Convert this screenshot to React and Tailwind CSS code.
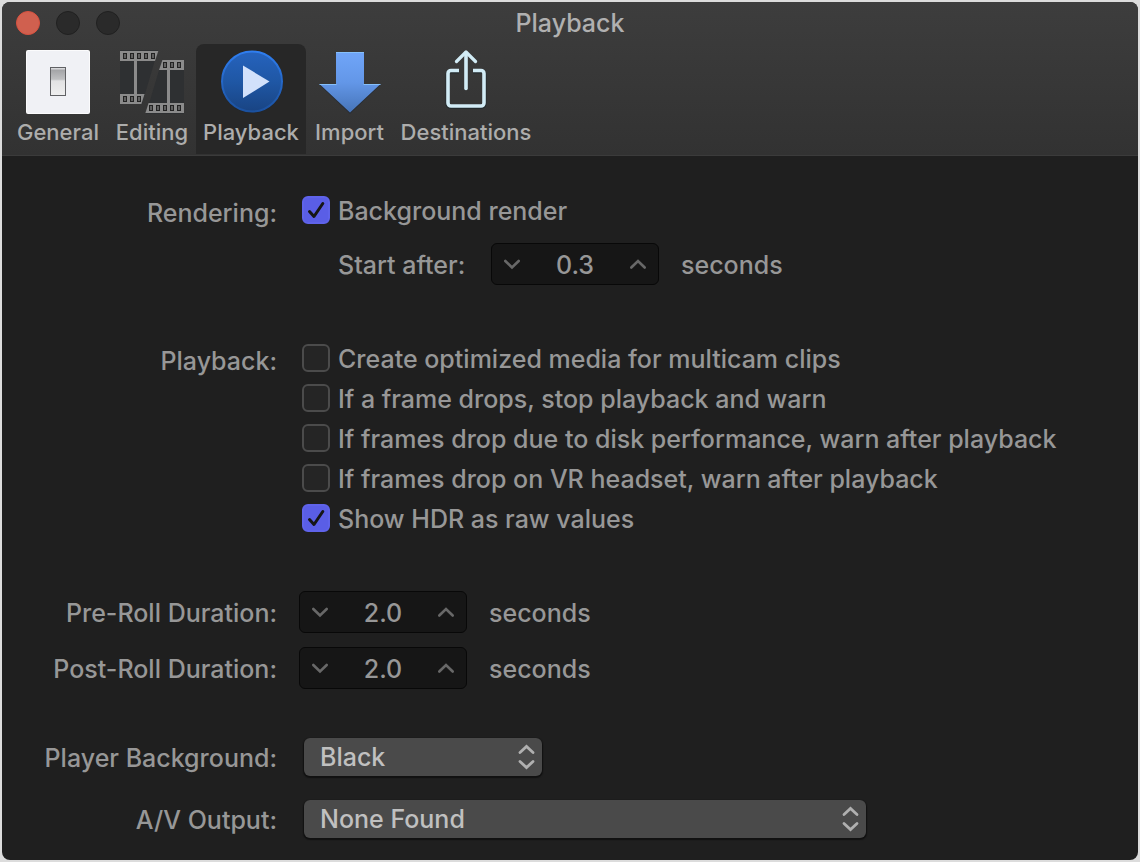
import React, { useState } from "react";

function GeneralIcon() {
  return (
    <svg width="64" height="64" viewBox="0 0 64 64" aria-hidden="true">
      <defs>
        <linearGradient id="switch-face" x1="0" y1="0" x2="0" y2="1">
          <stop offset="0" stopColor="#9c9da0" />
          <stop offset="0.42" stopColor="#bfc0c2" />
          <stop offset="0.48" stopColor="#e2e2e3" />
          <stop offset="1" stopColor="#efefef" />
        </linearGradient>
      </defs>
      <rect width="64" height="64" rx="2" fill="#fbfbfc" />
      <rect x="1" y="1" width="62" height="62" rx="1.5" fill="#f0f1f5" />
      <rect x="24.5" y="17.5" width="15" height="28" fill="url(#switch-face)" stroke="#606164" />
      <rect x="25" y="18" width="14" height="1.5" fill="#d7d8da" />
    </svg>
  );
}

function EditingIcon() {
  return (
    <svg width="64" height="64" viewBox="0 0 64 64" aria-hidden="true">
      <path d="M0 0H38L22 54H0Z" fill="#2e3032" />
      <path d="M42 10H64V64H26Z" fill="#2e3032" />
      <g fill="#8b8b8b">
        <path d="M0 1H38.3L35 11H0Z" />
        <path d="M0 44H24.6L21.4 54H0Z" />
        <rect x="14" y="10" width="3" height="35" />
        <path d="M42.4 10H64V20H39Z" />
        <path d="M28.6 53H64V63H25.4Z" />
        <rect x="47" y="19" width="3" height="35" />
      </g>
      <g fill="#606060" stroke="#222" strokeWidth="1">
        {[3, 10, 17, 24, 31].map((x) => (
          <rect key={"a" + x} x={x + 0.5} y="3.5" width="3" height="5" />
        ))}
        {[3, 10, 17].map((x) => (
          <rect key={"b" + x} x={x + 0.5} y="46.5" width="3" height="5" />
        ))}
        {[43, 50, 57].map((x) => (
          <rect key={"c" + x} x={x + 0.5} y="12.5" width="3" height="5" />
        ))}
        {[29, 36, 43, 50, 57].map((x) => (
          <rect key={"d" + x} x={x + 0.5} y="55.5" width="3" height="5" />
        ))}
      </g>
    </svg>
  );
}

function PlaybackIcon() {
  return (
    <svg width="64" height="64" viewBox="0 0 64 64" aria-hidden="true">
      <defs>
        <linearGradient id="play-disc" x1="0" y1="0" x2="0" y2="1">
          <stop offset="0" stopColor="#2663bd" />
          <stop offset="0.5" stopColor="#1f57a5" />
          <stop offset="1" stopColor="#194483" />
        </linearGradient>
        <linearGradient id="play-rim" x1="0" y1="0" x2="0" y2="1">
          <stop offset="0" stopColor="#2f7ef0" />
          <stop offset="1" stopColor="#1b519f" />
        </linearGradient>
      </defs>
      <circle cx="33" cy="32" r="31" fill="#20252c" />
      <circle cx="33" cy="31.5" r="30" fill="url(#play-disc)" stroke="url(#play-rim)" strokeWidth="2" />
      <path d="M24 15.5L50.5 31.5L24 48Z" fill="#d2e1fb" />
    </svg>
  );
}

function ImportIcon() {
  return (
    <svg width="64" height="64" viewBox="0 0 64 64" aria-hidden="true">
      <defs>
        <linearGradient id="import-fill" x1="0" y1="0" x2="0" y2="1">
          <stop offset="0" stopColor="#70a5f8" />
          <stop offset="0.5" stopColor="#6397e8" />
          <stop offset="1" stopColor="#4674b8" />
        </linearGradient>
      </defs>
      <path d="M18 3H46V35H62.5L32 64L1.5 35H18Z" fill="#292e36" />
      <path d="M18 2H46V34H62.5L32 62.5L1.5 34H18Z" fill="url(#import-fill)" />
      <path d="M18 2.5H46M1.5 34.5H18.5M45.5 34.5H62.5" stroke="#86c0fb" fill="none" />
    </svg>
  );
}

function DestinationsIcon() {
  return (
    <svg width="64" height="64" viewBox="0 0 64 64" aria-hidden="true">
      <g fill="none" stroke="#232b2e" strokeWidth="4" transform="translate(0 1)">
        <path d="M25 20.5H16.5A3 3 0 0 0 13.5 23.5V53A3 3 0 0 0 16.5 56H47.5A3 3 0 0 0 50.5 53V23.5A3 3 0 0 0 47.5 20.5H39" />
      </g>
      <g fill="none" stroke="#d2ecf6" strokeWidth="3.6">
        <path d="M25 20.5H17A3 3 0 0 0 14 23.5V53A3 3 0 0 0 17 56H47A3 3 0 0 0 50 53V23.5A3 3 0 0 0 47 20.5H39" />
        <path d="M32 3V38.5" strokeLinecap="round" />
        <path d="M22.5 11.5L32 2L41.5 11.5" strokeLinecap="round" strokeLinejoin="round" strokeWidth="3.2" />
      </g>
    </svg>
  );
}

const TABS = [
  { name: "General", icon: GeneralIcon, width: "w-[100px]" },
  { name: "Editing", icon: EditingIcon, width: "w-[88px]" },
  { name: "Playback", icon: PlaybackIcon, width: "w-[110px]" },
  { name: "Import", icon: ImportIcon, width: "w-[87px]" },
  { name: "Destinations", icon: DestinationsIcon, width: "w-[146px]" },
];

function Toolbar({ active, onSelect }) {
  return (
    <nav className="flex pl-1.5" aria-label="Preference panes">
      {TABS.map(({ name, icon: Icon, width }) => (
        <button
          key={name}
          type="button"
          aria-pressed={active === name}
          onClick={() => onSelect(name)}
          className={
            "flex h-[110px] flex-col items-center gap-1 rounded-t-lg pt-1.5 text-[22px] leading-7 font-medium whitespace-nowrap text-[#adadac] " +
            width +
            (active === name ? " bg-[#272727]" : "")
          }
        >
          <Icon />
          {name}
        </button>
      ))}
    </nav>
  );
}

function FieldRow({ label, htmlFor, children, className = "" }) {
  return (
    <div className={"flex items-center " + className}>
      <label htmlFor={htmlFor} className="w-[275px] shrink-0 pt-0.5 text-right">
        {label}
      </label>
      {children}
    </div>
  );
}

function Checkbox({ label, defaultChecked = false }) {
  return (
    <label className="flex h-10 items-center gap-2 whitespace-nowrap">
      <span className="grid size-7 shrink-0">
        <input
          type="checkbox"
          defaultChecked={defaultChecked}
          className="peer col-start-1 row-start-1 size-7 appearance-none rounded-md border-2 border-[#4b4b4b] bg-[#252525] checked:border-[#5f63ea] checked:bg-[#5a5ee6]"
        />
        <svg
          viewBox="0 0 28 28"
          aria-hidden="true"
          className="pointer-events-none invisible col-start-1 row-start-1 size-7 peer-checked:visible"
        >
          <path
            d="M7.5 15.5L12 20.5L20.8 7.5"
            fill="none"
            stroke="#161616"
            strokeWidth="3"
            strokeLinecap="round"
            strokeLinejoin="round"
          />
        </svg>
      </span>
      <span className="pt-0.5">{label}</span>
    </label>
  );
}

function Chevron({ up = false }) {
  return (
    <svg width="18" height="12" viewBox="0 0 18 12" aria-hidden="true">
      <path
        d={up ? "M2.300 9.500L9 3L15.700 9.500" : "M2.300 3L9 9.500L15.700 3"}
        fill="none"
        stroke="#686868"
        strokeWidth="2.6"
        strokeLinecap="round"
      />
    </svg>
  );
}

function Stepper({ id, initial }) {
  const [value, setValue] = useState(initial);
  const step = (delta) =>
    setValue((current) => Math.max(0, (parseFloat(current) || 0) + delta).toFixed(1));
  return (
    <div className="flex h-[42px] w-42 shrink-0 items-center rounded-md border border-[#080808] bg-[#161616]">
      <button type="button" aria-label="Decrease" onClick={() => step(-0.1)} className="flex h-full w-10 items-center justify-center">
        <Chevron />
      </button>
      <input
        id={id}
        type="text"
        inputMode="decimal"
        value={value}
        onChange={(event) => setValue(event.target.value)}
        className="min-w-0 flex-1 bg-transparent pt-0.5 text-center outline-none"
      />
      <button type="button" aria-label="Increase" onClick={() => step(0.1)} className="flex h-full w-10 items-center justify-center">
        <Chevron up />
      </button>
    </div>
  );
}

function Popup({ id, options, width }) {
  return (
    <div className={"ml-[27px] grid h-[38px] shrink-0 items-center " + width}>
      <select
        id={id}
        className="col-start-1 row-start-1 h-full w-full appearance-none rounded-md bg-[#4a4a4a] pl-4 text-[#c0c0c0] shadow-[0_1px_1px_1px_#111111]"
      >
        {options.map((option) => (
          <option key={option}>{option}</option>
        ))}
      </select>
      <svg
        width="18"
        height="26"
        viewBox="0 0 18 26"
        aria-hidden="true"
        className="pointer-events-none col-start-1 row-start-1 mr-[7px] justify-self-end"
      >
        <path
          d="M3 8.5L9.5 2.5L16 8.5M3 17.5L9.5 23.5L16 17.5"
          fill="none"
          stroke="#b0b0b0"
          strokeWidth="2.8"
          strokeLinecap="round"
        />
      </svg>
    </div>
  );
}

export default function App() {
  const [pane, setPane] = useState("Playback");
  return (
    <div className="flex min-h-screen bg-[#dcdcdc] p-0.5 font-['Inter','Liberation_Sans',sans-serif] text-[25px] leading-8 font-medium text-[#979797]">
      <main className="flex-1 overflow-hidden rounded-lg bg-[#1f1f1f]">
        <header className="h-[154px] border-b border-[#3b3b3b] bg-linear-to-b from-[#3d3d3d] to-[#323232]">
          <div className="grid h-[42px] grid-cols-[1fr_auto_1fr] items-center">
            <div className="flex gap-4 pl-3.5">
              <button type="button" aria-label="Close" className="size-6 rounded-full border border-[#d8513f] bg-[#d0604f]" />
              <button type="button" aria-label="Minimize" className="size-6 rounded-full border border-[#202020] bg-[#2a2a2a]" />
              <button type="button" aria-label="Zoom" className="size-6 rounded-full border border-[#202020] bg-[#2a2a2a]" />
            </div>
            <h1 className="text-[#b0b0b0]">Playback</h1>
          </div>
          <Toolbar active={pane} onSelect={setPane} />
        </header>

        <form className="pt-[34px] pb-[22px]" onSubmit={(event) => event.preventDefault()}>
          <div role="group" aria-labelledby="rendering-label" className="flex">
            <div id="rendering-label" className="w-[275px] shrink-0 pt-[7px] text-right">
              Rendering:
            </div>
            <div className="ml-[25px]">
              <Checkbox label="Background render" defaultChecked />
              <div className="mt-[13px] ml-9 flex items-center gap-[22px]">
                <label htmlFor="start-after" className="w-[131px] pt-0.5 whitespace-nowrap">
                  Start after:
                </label>
                <Stepper id="start-after" initial="0.3" />
                <span className="pt-0.5">seconds</span>
              </div>
            </div>
          </div>

          <div role="group" aria-labelledby="playback-label" className="mt-[53px] flex">
            <div id="playback-label" className="w-[275px] shrink-0 pt-[7px] text-right">
              Playback:
            </div>
            <div className="ml-[25px]">
              <Checkbox label="Create optimized media for multicam clips" />
              <Checkbox label="If a frame drops, stop playback and warn" />
              <Checkbox label="If frames drop due to disk performance, warn after playback" />
              <Checkbox label="If frames drop on VR headset, warn after playback" />
              <Checkbox label="Show HDR as raw values" defaultChecked />
            </div>
          </div>

          <div className="mt-[53px] flex flex-col gap-3.5">
            <FieldRow label="Pre-Roll Duration:" htmlFor="pre-roll" className="gap-[22px]">
              <Stepper id="pre-roll" initial="2.0" />
              <span className="pt-0.5">seconds</span>
            </FieldRow>
            <FieldRow label="Post-Roll Duration:" htmlFor="post-roll" className="gap-[22px]">
              <Stepper id="post-roll" initial="2.0" />
              <span className="pt-0.5">seconds</span>
            </FieldRow>
          </div>

          <div className="mt-[49px] flex flex-col gap-6">
            <FieldRow label="Player Background:" htmlFor="player-background">
              <Popup id="player-background" options={["Black", "White", "Checkerboard"]} width="w-[238px]" />
            </FieldRow>
            <FieldRow label="A/V Output:" htmlFor="av-output">
              <Popup id="av-output" options={["None Found"]} width="w-[562px]" />
            </FieldRow>
          </div>
        </form>
      </main>
    </div>
  );
}
